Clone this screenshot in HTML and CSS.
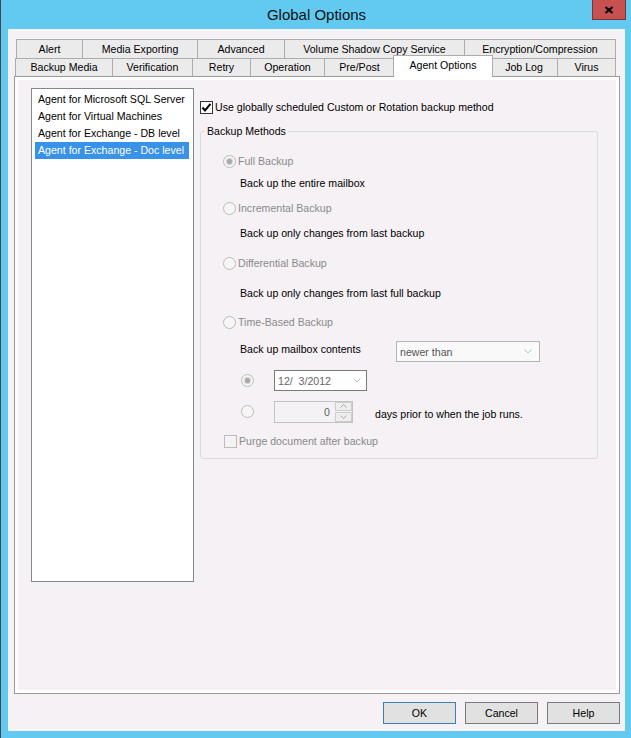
FILE: index.html
```html
<!DOCTYPE html>
<html lang="en">
<head>
    <meta charset="UTF-8">
    <meta name="viewport" content="width=device-width, initial-scale=1.0">
    <link rel="stylesheet" href="styles.css">
</head>
<body>
    <div class="window">
        <div class="titlebar">
            <span class="title">Global Options</span>
            <div class="close">
                <svg width="10" height="8" viewBox="0 0 10 8"><path d="M1.5 1 L8.5 7 M8.5 1 L1.5 7" stroke="#000" stroke-width="2.2" fill="none"/></svg>
            </div>
        </div>

        <div class="client">
            <div class="tabs">
                <div class="tab-row back">
                    <div class="tab first" style="width:67px">Alert</div>
                    <div class="tab" style="width:115px">Media Exporting</div>
                    <div class="tab" style="width:87px">Advanced</div>
                    <div class="tab" style="width:180px">Volume Shadow Copy Service</div>
                    <div class="tab" style="width:151px">Encryption/Compression</div>
                </div>
                <div class="tab-row front">
                    <div class="tab first" style="width:98px">Backup Media</div>
                    <div class="tab" style="width:80px">Verification</div>
                    <div class="tab" style="width:58px">Retry</div>
                    <div class="tab" style="width:74px">Operation</div>
                    <div class="tab" style="width:70px">Pre/Post</div>
                    <div class="tab selected" style="width:100px">Agent Options</div>
                    <div class="tab" style="width:67px">Job Log</div>
                    <div class="tab" style="width:58px">Virus</div>
                </div>
            </div>

            <div class="panel">
                <div class="page">
                    <ul class="agent-list">
                        <li>Agent for Microsoft SQL Server</li>
                        <li>Agent for Virtual Machines</li>
                        <li>Agent for Exchange - DB level</li>
                        <li class="active">Agent for Exchange - Doc level</li>
                    </ul>

                    <div class="settings">
                        <div class="check-row">
                            <span class="checkbox">
                                <svg width="11" height="11" viewBox="0 0 11 11"><path d="M1.5 5.5 L4 8.5 L9.5 1.8" stroke="#000" stroke-width="2" fill="none"/></svg>
                            </span>
                            <span>Use globally scheduled Custom or Rotation backup method</span>
                        </div>

                        <div class="group">
                            <span class="group-title">Backup Methods</span>
                            <div class="group-body">
                                <div class="option"><span class="radio on"></span><span class="muted">Full Backup</span></div>
                                <div class="desc">Back up the entire mailbox</div>
                                <div class="option"><span class="radio"></span><span class="muted">Incremental Backup</span></div>
                                <div class="desc">Back up only changes from last backup</div>
                                <div class="option"><span class="radio"></span><span class="muted">Differential Backup</span></div>
                                <div class="desc">Back up only changes from last full backup</div>
                                <div class="option"><span class="radio"></span><span class="muted">Time-Based Backup</span></div>

                                <div class="contents-row">
                                    <span class="contents-label">Back up mailbox contents</span>
                                    <div class="combo">
                                        <span>newer than</span>
                                        <svg width="8" height="5" viewBox="0 0 8 5"><path d="M0.5 0.5 L4 4 L7.5 0.5" stroke="#bfbfbf" fill="none"/></svg>
                                    </div>
                                </div>

                                <div class="sub-row">
                                    <span class="radio on"></span>
                                    <div class="datebox">
                                        <span>12/&nbsp;&nbsp;3/2012</span>
                                        <svg width="8" height="5" viewBox="0 0 8 5"><path d="M0.5 0.5 L4 4 L7.5 0.5" stroke="#bfbfbf" fill="none"/></svg>
                                    </div>
                                </div>

                                <div class="sub-row">
                                    <span class="radio"></span>
                                    <div class="spinner">
                                        <span class="spin-value">0</span>
                                        <div class="spin-buttons">
                                            <span class="spin-btn"><svg width="7" height="4" viewBox="0 0 7 4"><path d="M0.5 3.5 L3.5 0.5 L6.5 3.5" stroke="#a8a8a8" fill="none"/></svg></span>
                                            <span class="spin-btn"><svg width="7" height="4" viewBox="0 0 7 4"><path d="M0.5 0.5 L3.5 3.5 L6.5 0.5" stroke="#a8a8a8" fill="none"/></svg></span>
                                        </div>
                                    </div>
                                    <span class="days-label">days prior to when the job runs.</span>
                                </div>

                                <div class="purge-row">
                                    <span class="checkbox off"></span>
                                    <span class="muted">Purge document after backup</span>
                                </div>
                            </div>
                        </div>
                    </div>
                </div>
            </div>

            <div class="buttons">
                <button class="btn default">OK</button>
                <button class="btn">Cancel</button>
                <button class="btn">Help</button>
            </div>
        </div>
    </div>
</body>
</html>
```

FILE: styles.css
```css
body {
    margin: 0;
    font-family: "Liberation Sans", Arial, sans-serif;
    font-size: 10.6px;
    color: #000;
}

.window {
    width: 631px;
    height: 738px;
    box-sizing: border-box;
    background-color: #62caf0;
    border-left: 1px solid #3a4a52;
    padding: 0 6px 7px 7px;
    display: flex;
    flex-direction: column;
}

.titlebar {
    height: 29px;
    position: relative;
    display: flex;
    justify-content: center;
    align-items: center;
}

.title {
    font-size: 15px;
    color: #111;
}

.close {
    position: absolute;
    top: 0;
    right: -1px;
    width: 34px;
    height: 20px;
    box-sizing: border-box;
    background-color: #c75050;
    border: 1px solid #7b3434;
    border-top: none;
    display: flex;
    justify-content: center;
    align-items: center;
}

.client {
    flex: 1;
    background-color: #f5f1f5;
    padding: 10px 5px 7px 6px;
    display: flex;
    flex-direction: column;
}

/* tabs */
.tabs {
    height: 37px;
    display: flex;
    flex-direction: column;
}

.tab-row {
    display: flex;
}

.tab-row.back {
    height: 19px;
    margin-left: 2px;
}

.tab-row.front {
    height: 18px;
    margin-left: 1px;
}

.tab {
    box-sizing: border-box;
    border-top: 1px solid #acacac;
    border-right: 1px solid #acacac;
    background-color: #ecebec;
    text-align: center;
    white-space: nowrap;
}

.tab.first {
    border-left: 1px solid #acacac;
}

.back .tab {
    line-height: 18px;
}

.front .tab {
    line-height: 17px;
}

.tab.selected {
    position: relative;
    z-index: 2;
    height: 22px;
    margin: -3px -2px 0 -2px;
    border-left: 1px solid #acacac;
    background-color: #fff;
    line-height: 18px;
}

/* panel */
.panel {
    flex: 1;
    border: 1px solid #9a9a9a;
    background-color: #fff;
    padding: 3px;
    display: flex;
}

.page {
    flex: 1;
    background-color: #f5f1f5;
    padding: 8px 0 0 13px;
    display: flex;
    align-items: flex-start;
}

.agent-list {
    list-style: none;
    margin: 0;
    width: 163px;
    height: 494px;
    box-sizing: border-box;
    border: 1px solid #828790;
    background-color: #fff;
    padding: 2px 4px 2px 3px;
}

.agent-list li {
    height: 17px;
    line-height: 17px;
    padding-left: 3px;
    white-space: nowrap;
}

.agent-list li.active {
    background-color: #3892e8;
    color: #fff;
}

.settings {
    margin-left: 6px;
    margin-top: 12px;
}

.check-row {
    height: 14px;
    display: flex;
    align-items: center;
}

.check-row span + span {
    margin-left: 2px;
}

.checkbox {
    width: 13px;
    height: 13px;
    box-sizing: border-box;
    border: 1px solid #333;
    background-color: #fff;
    display: inline-flex;
    justify-content: center;
    align-items: center;
    flex: none;
}

.checkbox.off {
    border-color: #bcbcbc;
    background-color: #f4f4f4;
}

.group {
    position: relative;
    margin-top: 17px;
    width: 398px;
    height: 328px;
    box-sizing: border-box;
    border: 1px solid #d5dde3;
    border-radius: 3px;
    padding: 19px 0 0 22px;
}

.group-title {
    position: absolute;
    top: -7px;
    left: 4px;
    padding: 0 2px;
    line-height: 13px;
    background-color: #f5f1f5;
}

.group-body {
    display: grid;
    grid-template-rows: 22px 25px 25px 30px 30px 29px 29px 29px 31px 30px 20px;
}

.option,
.purge-row {
    height: 20px;
    display: flex;
    align-items: center;
}

.option .radio {
    margin-right: 2px;
}

.muted {
    color: #8a8a8a;
}

.desc {
    height: 20px;
    line-height: 20px;
    margin-left: 17px;
}

.radio {
    width: 13px;
    height: 13px;
    box-sizing: border-box;
    border: 1px solid #bcbcbc;
    border-radius: 50%;
    background-color: #f6f6f6;
    display: inline-flex;
    justify-content: center;
    align-items: center;
    flex: none;
}

.radio.on::after {
    content: "";
    width: 5px;
    height: 5px;
    border-radius: 50%;
    background-color: #a9a9a9;
    box-shadow: 0 0 0 1px #d2d2d2;
}

.contents-row {
    display: flex;
    align-items: flex-start;
    margin-left: 17px;
}

.contents-label {
    width: 156px;
    line-height: 14px;
    margin-top: 1px;
}

.combo {
    width: 144px;
    height: 21px;
    box-sizing: border-box;
    border: 1px solid #b5b5b5;
    background-color: #faf9fa;
    color: #555;
    padding: 0 7px 0 3px;
    display: flex;
    justify-content: space-between;
    align-items: center;
}

.sub-row {
    display: flex;
    align-items: center;
    margin-left: 18px;
    height: 21px;
}

.sub-row .radio {
    margin-right: 20px;
}

.datebox {
    width: 93px;
    height: 21px;
    box-sizing: border-box;
    border: 1px solid #7a7a7a;
    background-color: #fff;
    color: #666;
    padding: 0 5px 0 3px;
    display: flex;
    justify-content: space-between;
    align-items: center;
}

.spinner {
    width: 79px;
    height: 22px;
    box-sizing: border-box;
    border: 1px solid #c3c3c3;
    background-color: #f4f2f4;
    display: flex;
}

.spin-value {
    flex: 1;
    text-align: right;
    line-height: 20px;
    padding-right: 4px;
    color: #666;
}

.spin-buttons {
    width: 17px;
    display: flex;
    flex-direction: column;
    gap: 1px;
    padding: 0 0 0 1px;
}

.spin-btn {
    flex: 1;
    box-sizing: border-box;
    border: 1px solid #cdcdcd;
    background-color: #eeeeee;
    display: flex;
    justify-content: center;
    align-items: center;
}

.days-label {
    margin-left: 22px;
    align-self: flex-start;
    margin-top: 6px;
    line-height: 14px;
}

.purge-row {
    margin-left: 1px;
}

.purge-row .checkbox {
    margin-right: 2px;
}

/* bottom buttons */
.buttons {
    height: 22px;
    margin-top: 8px;
    display: flex;
    justify-content: flex-end;
    gap: 9px;
}

.btn {
    width: 73px;
    height: 22px;
    border: 1px solid #7a7a7a;
    background-color: #e1e1e1;
    font-family: "Liberation Sans", Arial, sans-serif;
    font-size: 10.6px;
    color: #000;
    padding: 0;
}

.btn.default {
    border-color: #3c7fb1;
}
```
